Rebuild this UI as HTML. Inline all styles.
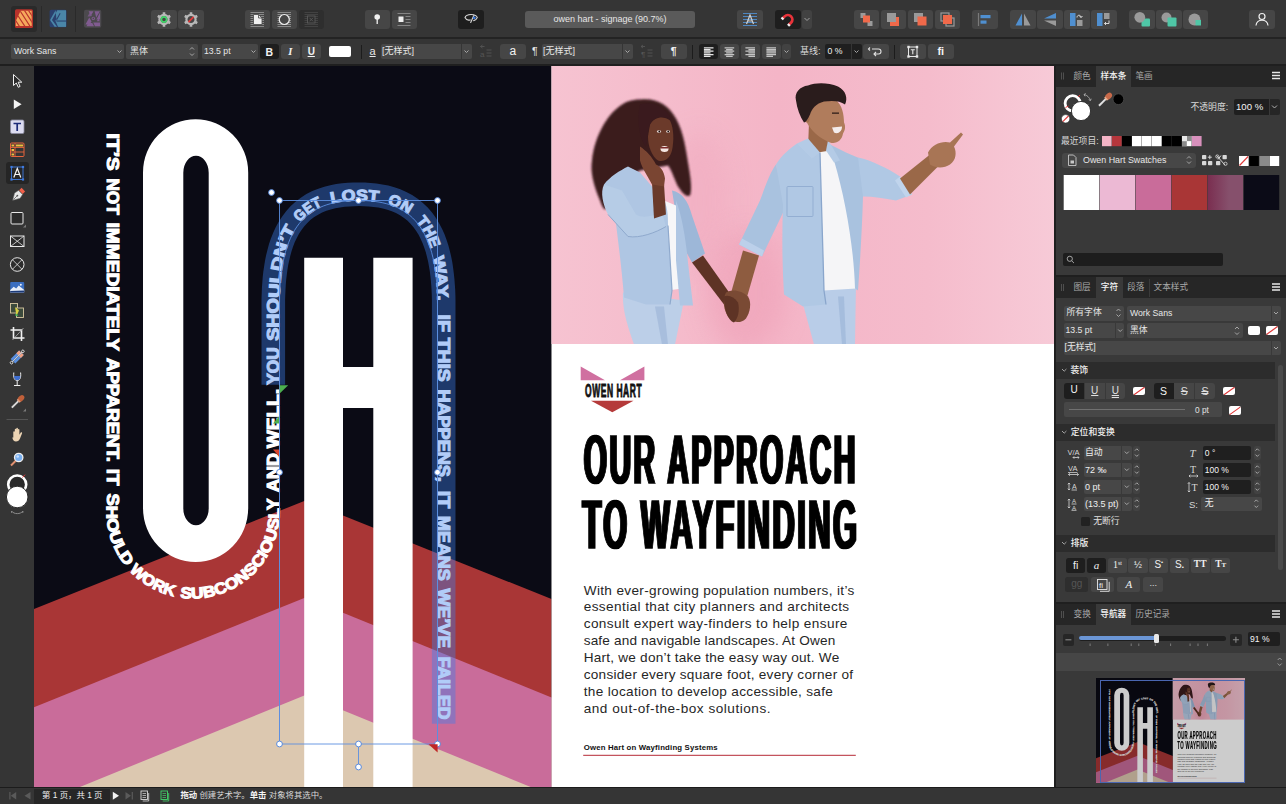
<!DOCTYPE html>
<html lang="zh"><head><meta charset="utf-8"><title>owen hart - signage</title>
<style>
html,body{margin:0;padding:0;background:#2a2a2a;}
body{width:1286px;height:804px;overflow:hidden;position:relative;font-family:"Liberation Sans","Noto Sans CJK SC",sans-serif;font-size:9px;color:#dcdcdc;}
.a{position:absolute;box-sizing:border-box;}
.btn{position:absolute;box-sizing:border-box;background:#464646;border-radius:3px;}
.dk{background:#1e1e1e;}
.dis{background:#2e2e2e;}
.fld{position:absolute;box-sizing:border-box;background:#474747;border-radius:2px;color:#e4e4e4;white-space:nowrap;overflow:hidden;}
.dfld{position:absolute;box-sizing:border-box;background:#1f1f1f;border-radius:2px;color:#f0f0f0;white-space:nowrap;overflow:hidden;}
.t{position:absolute;white-space:nowrap;line-height:1;}
svg{position:absolute;overflow:visible;}
.cj{font-family:"Liberation Sans","Noto Sans CJK SC",sans-serif;}
</style></head><body>
<!-- ===== top toolbar ===== -->
<div class="a" style="left:0;top:0;width:1286px;height:38px;background:#353535;"></div>
<div class="a" style="left:0;top:37px;width:1286px;height:2px;background:#232323;"></div>
<div class="btn dk" style="left:11px;top:6px;width:26px;height:26px;background:#2a2a2a;"></div>
<div class="a" style="left:41px;top:6px;width:1px;height:26px;background:#2a2a2a;"></div>
<div class="a" style="left:75px;top:6px;width:1px;height:26px;background:#2a2a2a;"></div>
<div class="btn" style="left:151px;top:10px;width:26px;height:19px;"></div>
<div class="btn" style="left:178px;top:10px;width:26px;height:19px;"></div>
<div class="btn" style="left:244.5px;top:10px;width:25.5px;height:19px;"></div>
<div class="btn" style="left:271.5px;top:10px;width:25.5px;height:19px;"></div>
<div class="btn dis" style="left:298.5px;top:10px;width:25.5px;height:19px;"></div>
<div class="btn" style="left:364.5px;top:10px;width:25.5px;height:19px;"></div>
<div class="btn" style="left:391.5px;top:10px;width:25.5px;height:19px;"></div>
<div class="btn dk" style="left:458px;top:10px;width:26px;height:19px;"></div>
<div class="a" style="left:525px;top:11px;width:170px;height:17px;background:#5a5a5a;border-radius:3px;"></div>
<div class="t" style="left:525px;top:15px;width:170px;text-align:center;font-size:9px;color:#e6e6e6;">owen hart - signage (90.7%)</div>
<div class="btn" style="left:737px;top:10px;width:25.5px;height:19px;"></div>
<div class="btn dk" style="left:775px;top:10px;width:26px;height:19px;"></div>
<div class="btn" style="left:802px;top:10px;width:10px;height:19px;background:#424242;"></div>
<div class="btn" style="left:853.5px;top:10px;width:25.5px;height:19px;"></div>
<div class="btn" style="left:880.5px;top:10px;width:25.5px;height:19px;"></div>
<div class="btn" style="left:907.5px;top:10px;width:25.5px;height:19px;"></div>
<div class="btn" style="left:934.5px;top:10px;width:25.5px;height:19px;"></div>
<div class="btn" style="left:972px;top:10px;width:26px;height:19px;"></div>
<div class="btn" style="left:1010px;top:10px;width:26px;height:19px;"></div>
<div class="btn" style="left:1037px;top:10px;width:26px;height:19px;"></div>
<div class="btn" style="left:1064px;top:10px;width:26px;height:19px;"></div>
<div class="btn" style="left:1091px;top:10px;width:25.5px;height:19px;"></div>
<div class="btn" style="left:1129px;top:10px;width:26px;height:19px;"></div>
<div class="btn" style="left:1156px;top:10px;width:26px;height:19px;"></div>
<div class="btn" style="left:1183px;top:10px;width:25px;height:19px;"></div>
<div class="btn" style="left:1249px;top:10px;width:26px;height:19px;"></div>
<svg width="1286" height="39" viewBox="0 0 1286 39" style="left:0;top:0;">
<!-- publisher -->
<rect x="15" y="9.200" width="18" height="18.800" rx="1.600" fill="#b9322b"/>
<clipPath id="cpub"><path d="M15.800,21 L20.600,10.700 H31.700 V26 H15.800 Z"/></clipPath>
<g clip-path="url(#cpub)"><rect x="15" y="9" width="18" height="19" fill="#f6a85c"/>
<g stroke="#b9322b" stroke-width="1.150"><path d="M11.500 14l9 14M15.500 12l10.500 16M19.500 10l11 17M23.500 9l10 15.500M27.500 9l8 12"/></g></g>
<!-- designer -->
<rect x="49.600" y="9.800" width="17" height="17.500" rx="1.600" fill="#2b416f"/>
<path d="M55.600,10.300 H66 V20.400 H56.800 L60.600,13.400 L59.700,12.900 L55.400,20.800 L58,26.700 H66 V21.800 H56.600 M55.600,10.300 L50.300,19.600 V20.500 L54.600,26.700 H57 L52,20 L57.300,10.300 Z" fill="#4a86a8"/>
<path d="M56.600,21.800 H66 V26.700 H58.700 Z" fill="#4a86a8"/>
<!-- photo -->
<rect x="84" y="9.800" width="17.300" height="17.900" rx="2" fill="#4b494d"/>
<g fill="#805b90"><path d="M88.600,11.200 H93.500 L91,15.400 Z"/><path d="M94.600,11.200 H99.900 L96.200,17.600 Z"/><path d="M100,12.500 V19.500 H96.400 Z"/><path d="M85.400,24.500 L89.300,17.600 L91.500,21.400 L89.600,24.500 Z"/><path d="M86.500,26.200 H94 L92.300,23 H88.200 Z"/><path d="M95,26.200 L93.200,22.400 H100 V26.200 Z"/><path d="M99.900,21.200 H96.800 L98.400,18.400 Z"/><path d="M87.500,16.500 L90,12.300 L92,16 L89.300,16.500 Z" opacity="0.800"/><circle cx="93.300" cy="18.400" r="1.700"/></g>
<circle cx="93.300" cy="18.400" r="0.800" fill="#4b494d"/>
<!-- gears -->
<g id="gear1" transform="translate(164,19.5)"><circle r="4.6" fill="none" stroke="#b8b8b8" stroke-width="2.2"/><g stroke="#b8b8b8" stroke-width="2.6"><path d="M0-7.2V-5M0 7.2V5M-6.2-3.6l1.9 1.1M6.2-3.6l-1.9 1.1M-6.2 3.6l1.9-1.1M6.2 3.6l-1.9-1.1"/></g><circle r="2.6" fill="none" stroke="#42d66a" stroke-width="1.6"/></g>
<g transform="translate(191,19.5)"><circle r="4.6" fill="none" stroke="#b8b8b8" stroke-width="2.2"/><g stroke="#b8b8b8" stroke-width="2.6"><path d="M0-7.2V-5M0 7.2V5M-6.2-3.6l1.9 1.1M6.2-3.6l-1.9 1.1M-6.2 3.6l1.9-1.1M6.2 3.6l-1.9-1.1"/></g><path d="M-2.6 2.6L2.6-2.6" stroke="#e03a3a" stroke-width="1.7"/></g>
<!-- doc / circle / x lined icons -->
<g stroke="#9a9a9a" stroke-width="0.8"><path d="M250.5 12.5h13.5M250.5 14.5h13.5M250.5 16.5h13.5M250.5 18.5h13.5M250.5 20.5h13.5M250.5 22.5h13.5M250.5 24.5h13.5M250.5 26.5h13.5"/><path d="M277.5 12.5h13.5M277.5 14.5h13.5M277.5 16.5h13.5M277.5 18.5h13.5M277.5 20.5h13.5M277.5 22.5h13.5M277.5 24.5h13.5M277.5 26.5h13.5"/></g>
<g stroke="#484848" stroke-width="0.8"><path d="M304.500 12.5h13.500M304.500 14.500h13.500M304.500 16.500h13.500M304.500 18.500h13.500M304.500 20.500h13.500M304.500 22.500h13.500M304.500 24.500h13.500M304.500 26.500h13.500"/></g>
<path d="M253.500 14.500h5l3.500 3.500v6.500h-8.500z" fill="#f0f0f0" stroke="#464646" stroke-width="0.8"/>
<path d="M258.500 14.500v3.500h3.500" fill="none" stroke="#464646" stroke-width="0.8"/>
<circle cx="284.300" cy="19.500" r="5" fill="#464646" stroke="#f0f0f0" stroke-width="1.2"/>
<rect x="307.500" y="16" width="7.500" height="7" fill="#2e2e2e" stroke="#5a5a5a" stroke-width="0.9"/><path d="M309.500 17.800l3.500 3.500M313 17.800l-3.500 3.500" stroke="#5a5a5a" stroke-width="0.9"/>
<!-- pin -->
<circle cx="377.200" cy="17" r="2.800" fill="#f2f2f2"/><path d="M377.200 19v5" stroke="#f2f2f2" stroke-width="1.300"/>
<!-- text wrap icon -->
<g stroke="#8c8c8c" stroke-width="0.9"><path d="M397.500 13.500h13M397.500 25.500h13M405.500 16.500h5M405.500 19.500h5M405.500 22.500h5"/></g><rect x="398.500" y="16.500" width="5" height="5.500" fill="#f0f0f0"/>
<!-- eye/preview -->
<path d="M465,17.600 C466.200,13.400 476,13.400 477.300,17.600 C476.600,19.200 475.200,20.300 473.700,20.600 M465,17.600 C466,19.600 468,20.600 470.200,19.900 M473.700,15.800 L470.700,22.500" fill="none" stroke="#d8d8d8" stroke-width="1.100" stroke-linecap="round"/><circle cx="474.300" cy="17.800" r="1.400" fill="#3d7be0"/>
<!-- baseline grid -->
<g stroke="#4f8fd0" stroke-width="0.900"><path d="M743 13.500h14M743 16.500h14M743 19.500h14M743 22.500h14M743 25.500h14"/></g>
<path d="M746.500 24l3.500-9 3.500 9M747.800 21h4.400" fill="none" stroke="#d0d0d0" stroke-width="1.200"/>
<!-- magnet -->
<g transform="translate(788.200,19.200) rotate(45)"><path d="M-4.500 3.500v-3a4.500 4.500 0 0 1 9 0v3" fill="none" stroke="#e8333a" stroke-width="2.800"/><rect x="-5.900" y="2.500" width="2.800" height="2.200" fill="#f2f2f2"/><rect x="3.100" y="2.500" width="2.800" height="2.200" fill="#f2f2f2"/></g>
<path d="M804.500 18l2.500 2.500 2.500-2.500" fill="none" stroke="#a0a0a0" stroke-width="1"/>
<!-- arrange icons -->
<rect x="860.500" y="13" width="5" height="5" fill="#9a9a9a"/><rect x="867.500" y="21" width="5" height="5" fill="#9a9a9a"/><rect x="863" y="15.500" width="7" height="7" fill="#f0694a"/>
<rect x="890" y="17" width="9" height="9" fill="#f0694a"/><rect x="887" y="13" width="9" height="9" fill="#9a9a9a"/>
<rect x="914" y="13" width="9" height="9" fill="#9a9a9a"/><rect x="917.500" y="16.500" width="9" height="9" fill="#f0694a"/>
<rect x="941" y="13" width="8" height="8" fill="none" stroke="#9a9a9a" stroke-width="1.200"/><rect x="946" y="18" width="8" height="8" fill="none" stroke="#9a9a9a" stroke-width="1.200"/><rect x="943" y="15" width="9" height="9" fill="#f0694a"/>
<!-- align -->
<path d="M978.500 13v13" stroke="#7a7a7a" stroke-width="1.200"/><rect x="980.500" y="15" width="10" height="3.200" fill="#4f8fd0"/><rect x="980.500" y="20.500" width="6" height="3.200" fill="#4f8fd0"/>
<!-- flips -->
<path d="M1022 13.500v12h-6.500z" fill="#4f8fd0"/><path d="M1024 13.500v12h6.500z" fill="#9a9a9a"/>
<path d="M1056 18.500h-12l12-5.500z" fill="#4f8fd0"/><path d="M1056 20.500h-12l12 5.500z" fill="#9a9a9a"/>
<rect x="1070" y="13" width="5.500" height="13" fill="#4f8fd0"/><rect x="1077" y="20" width="5.500" height="6" fill="#9a9a9a"/><path d="M1077 17.500c0-3 4-3 4 0M1081 17.500l-1.500-1.500M1081 17.500l1.500-1.500" fill="none" stroke="#e8e8e8" stroke-width="0.900"/>
<rect x="1097" y="13" width="5.500" height="13" fill="#4f8fd0"/><rect x="1104" y="13" width="5.500" height="6" fill="#9a9a9a"/><path d="M1109 20.500v3h-4.500M1104.500 23.500l1.500-1.500M1104.500 23.500l1.500 1.500" fill="none" stroke="#e8e8e8" stroke-width="0.900"/>
<!-- boolean -->
<rect x="1141.500" y="18.500" width="8.500" height="8" rx="1" fill="#4fc6a6"/><circle cx="1139.800" cy="17.300" r="5.400" fill="#9a9a9a"/>
<circle cx="1166.500" cy="17.500" r="5" fill="#9a9a9a"/><rect x="1167.500" y="17.500" width="9" height="9" rx="1" fill="#4fc6a6"/>
<circle cx="1194.500" cy="19.500" r="6" fill="#9a9a9a"/><rect x="1195.500" y="20" width="5.500" height="5.500" fill="#4fc6a6"/>
<!-- user -->
<circle cx="1262" cy="16.500" r="3" fill="none" stroke="#f0f0f0" stroke-width="1.200"/><path d="M1256 25.500c0.500-7 11.500-7 12 0" fill="none" stroke="#f0f0f0" stroke-width="1.200"/>
</svg>
<!-- ===== context toolbar ===== -->
<div class="a" style="left:0;top:39px;width:1286px;height:25px;background:#353535;"></div>
<div class="a" style="left:0;top:64px;width:1286px;height:1.500px;background:#1f1f1f;"></div>
<div class="fld" style="left:11px;top:44px;width:103.500px;height:15px;border-radius:2px 0 0 2px;"></div>
<div class="fld" style="left:115px;top:44px;width:9px;height:15px;border-radius:0 2px 2px 0;"></div>
<div class="t" style="left:14px;top:47px;font-size:8.700px;color:#e8e8e8;">Work Sans</div>
<div class="fld" style="left:126px;top:44px;width:72px;height:15px;"></div>
<div class="t cj" style="left:130px;top:46.500px;font-size:9px;color:#e8e8e8;">黑体</div>
<div class="fld" style="left:202px;top:44px;width:46.500px;height:15px;border-radius:2px 0 0 2px;"></div>
<div class="fld" style="left:249px;top:44px;width:9px;height:15px;border-radius:0 2px 2px 0;"></div>
<div class="t" style="left:204px;top:47px;font-size:8.700px;color:#e8e8e8;">13.5 pt</div>
<div class="btn dk" style="left:259.500px;top:44px;width:19.500px;height:15px;"></div>
<div class="btn" style="left:280.500px;top:44px;width:19.500px;height:15px;"></div>
<div class="btn" style="left:301.500px;top:44px;width:19.500px;height:15px;"></div>
<div class="t" style="left:259.500px;top:46.500px;width:19.500px;text-align:center;font-size:10.500px;font-weight:bold;color:#f2f2f2;">B</div>
<div class="t" style="left:280.500px;top:46.500px;width:19.500px;text-align:center;font-size:10.500px;font-weight:bold;font-style:italic;color:#f2f2f2;font-family:'Liberation Serif',serif;">I</div>
<div class="t" style="left:301.500px;top:46.500px;width:19.500px;text-align:center;font-size:10px;font-weight:bold;color:#f2f2f2;text-decoration:underline;">U</div>
<div class="a" style="left:329px;top:45.500px;width:21.500px;height:11.500px;background:#fff;border-radius:2px;"></div>
<div class="a" style="left:361px;top:45px;width:1px;height:14px;background:#1c1c1c;"></div>
<div class="t" style="left:369.500px;top:45.500px;font-size:11px;color:#e8e8e8;text-decoration:underline;">a</div>
<div class="fld" style="left:381px;top:44px;width:80px;height:15px;border-radius:2px 0 0 2px;"></div>
<div class="fld" style="left:462px;top:44px;width:9.500px;height:15px;border-radius:0 2px 2px 0;"></div>
<div class="t cj" style="left:382px;top:46.500px;font-size:9px;color:#e8e8e8;">[无样式]</div>
<div class="btn" style="left:500px;top:44px;width:25.500px;height:15px;"></div>
<div class="t" style="left:500px;top:45px;width:25.500px;text-align:center;font-size:12px;color:#f2f2f2;">a</div>
<div class="t" style="left:532px;top:46px;font-size:10.500px;color:#e8e8e8;">¶</div>
<div class="fld" style="left:541.500px;top:44px;width:80.500px;height:15px;border-radius:2px 0 0 2px;"></div>
<div class="fld" style="left:623px;top:44px;width:9.500px;height:15px;border-radius:0 2px 2px 0;"></div>
<div class="t cj" style="left:543px;top:46.500px;font-size:9px;color:#e8e8e8;">[无样式]</div>
<div class="btn" style="left:661px;top:44px;width:25.500px;height:15px;"></div>
<div class="t" style="left:661px;top:46px;width:25.500px;text-align:center;font-size:10.500px;font-weight:bold;color:#f2f2f2;">¶</div>
<div class="a" style="left:692px;top:45px;width:1px;height:14px;background:#1c1c1c;"></div>
<div class="btn dk" style="left:698.500px;top:44px;width:19.500px;height:15px;"></div>
<div class="btn" style="left:719.500px;top:44px;width:19.500px;height:15px;"></div>
<div class="btn" style="left:740.500px;top:44px;width:19.500px;height:15px;"></div>
<div class="btn" style="left:761.500px;top:44px;width:19.500px;height:15px;"></div>
<div class="btn" style="left:782px;top:44px;width:8.500px;height:15px;background:#424242;"></div>
<div class="t cj" style="left:800px;top:46.500px;font-size:9px;color:#d8d8d8;">基线:</div>
<div class="dfld" style="left:825px;top:44px;width:26px;height:15px;border-radius:2px 0 0 2px;"></div>
<div class="dfld" style="left:852px;top:44px;width:9.500px;height:15px;border-radius:0 2px 2px 0;"></div>
<div class="t" style="left:827.500px;top:47px;font-size:8.700px;color:#f0f0f0;">0 %</div>
<div class="btn" style="left:863px;top:44px;width:25.500px;height:15px;"></div>
<div class="a" style="left:894px;top:45px;width:1px;height:14px;background:#1c1c1c;"></div>
<div class="btn" style="left:900px;top:44px;width:25.500px;height:15px;"></div>
<div class="btn" style="left:928px;top:44px;width:25.500px;height:15px;"></div>
<div class="t" style="left:928px;top:45.500px;width:25.500px;text-align:center;font-size:11px;font-weight:bold;color:#f2f2f2;">fi</div>
<svg width="1286" height="26" viewBox="0 39 1286 26" style="left:0;top:39px;">
<g fill="none" stroke="#a8a8a8" stroke-width="1"><path d="M117.500 50.500l2 2 2-2M251.500 50.500l2 2 2-2M464.500 50.500l2 2 2-2M625.500 50.500l2 2 2-2M784.500 50.500l2 2 2-2M854.500 50.500l2 2 2-2"/>
<path d="M190 49.500l2-2 2 2M190 53.500l2 2 2-2"/></g>
<!-- disabled style icons -->
<g stroke="#555" stroke-width="0.900" fill="none"><path d="M480.500 46.500h4M482.500 45l-2 1.500 2 1.500M486.500 50h5M486.500 53h5M486.500 56h5"/><path d="M641 46.500h4M643 45l-2 1.500 2 1.500M647.500 50h5M647.500 53h5M647.500 56h5"/></g>
<text x="480" y="57" font-size="8" fill="#555" font-family="Liberation Sans, sans-serif">a</text>
<text x="641" y="57" font-size="8" fill="#555" font-family="Liberation Sans, sans-serif">¶</text>
<!-- align icons -->
<path d="M703.9 47.8h9.600M703.9 49.5h6.600M703.9 51.2h9.600M703.9 52.9h6.600M703.9 54.6h9.600M703.9 56.3h6.600" stroke="#e6e6e6" stroke-width="1.250"/><path d="M724.6 47.8h9.600M726.1 49.5h6.600M724.6 51.2h9.600M726.1 52.9h6.600M724.6 54.6h9.600M726.1 56.3h6.600" stroke="#c4c4c4" stroke-width="1.250"/><path d="M745.4 47.8h9.600M748.4 49.5h6.600M745.4 51.2h9.600M748.4 52.9h6.600M745.4 54.6h9.600M748.4 56.3h6.600" stroke="#c4c4c4" stroke-width="1.250"/><path d="M766.4 47.8h9.600M766.4 49.5h9.600M766.4 51.2h9.600M766.4 52.9h9.600M766.4 54.6h9.600M766.4 56.3h6.600" stroke="#c4c4c4" stroke-width="1.250"/>
<!-- return arrow -->
<path d="M872 49h6.500a2.500 2.500 0 0 1 0 5h-4M876 52l-2 2 2 2M870 47.500l-1.500 1.500 1.500 1.500" fill="none" stroke="#e0e0e0" stroke-width="1.100"/>
<!-- text frame icon -->
<rect x="908.500" y="47" width="8.500" height="9.500" fill="none" stroke="#e8e8e8" stroke-width="1"/><g fill="#e8e8e8"><rect x="907.300" y="45.800" width="2.400" height="2.400"/><rect x="915.800" y="45.800" width="2.400" height="2.400"/><rect x="907.300" y="55.300" width="2.400" height="2.400"/><rect x="915.800" y="55.300" width="2.400" height="2.400"/></g>
<path d="M910.800 49.800h4M912.800 49.800v4.500" stroke="#e8e8e8" stroke-width="1.100"/>
</svg>
<!-- ===== left tools ===== -->
<div class="a" style="left:0;top:65.500px;width:34px;height:722px;background:#353535;"></div>
<div class="btn dk" style="left:6px;top:162px;width:22.500px;height:22px;background:#252525;"></div>
<svg width="34" height="722" viewBox="0 65 34 722" style="left:0;top:65px;">
<!-- move arrow -->
<path d="M13.500 74.500v11l2.800-2.500 2 4.300 1.800-0.900-2-4.200h3.700z" fill="#2a2a2a" stroke="#f0f0f0" stroke-width="1"/>
<!-- node arrow -->
<path d="M13.800 99.500v9.500l7.800-4.700z" fill="#f4f4f4"/>
<!-- frame text -->
<rect x="10.500" y="120" width="13.500" height="13.500" rx="1.500" fill="#dcdcf0" stroke="#8a8aa0" stroke-width="0.800"/><path d="M13.500 123.500h7.500M17.200 123.500v7.500" stroke="#1c2a78" stroke-width="1.700"/>
<!-- table -->
<rect x="10.500" y="143" width="13.500" height="13.500" rx="1" fill="none" stroke="#e8643c" stroke-width="1"/><path d="M10.500 147.500h13.500M10.500 152h13.500M15 143v13.500" stroke="#e8643c" stroke-width="0.900"/><rect x="11.500" y="144.500" width="2.500" height="2" fill="#f0c040"/><rect x="16" y="144.500" width="7" height="2" fill="#f0c040"/><rect x="11.500" y="149" width="2.500" height="2" fill="#f0c040"/><rect x="11.500" y="153.500" width="2.500" height="2" fill="#f0c040"/>
<!-- artistic text -->
<rect x="11.500" y="167" width="11.500" height="12.500" fill="none" stroke="#3f7be0" stroke-width="0.900"/><g fill="#3f7be0"><rect x="10.400" y="165.900" width="2.200" height="2.200"/><rect x="21.900" y="165.900" width="2.200" height="2.200"/><rect x="10.400" y="178.400" width="2.200" height="2.200"/><rect x="21.900" y="178.400" width="2.200" height="2.200"/></g>
<path d="M13.800 177.500l3.500-9 3.500 9M15 174.500h4.600" fill="none" stroke="#f4f4f4" stroke-width="1.200"/>
<!-- pen -->
<g transform="translate(17,196) rotate(45)"><path d="M-2.500-9h5v3.500h-5z" fill="#f0604a"/><path d="M-2.800-5h5.600l1 4.500-3.800 6.500-3.800-6.500z" fill="#e8e8e8" stroke="#777" stroke-width="0.500"/><path d="M0 0v5" stroke="#555" stroke-width="0.700"/><circle r="0.900" cy="-0.500" fill="#555"/></g>
<!-- rectangle -->
<rect x="11" y="212.500" width="12" height="11.500" rx="1" fill="#2c2c2c" stroke="#e8e8e8" stroke-width="1"/><path d="M26 227.500v-3l-3 3z" fill="#7a7a7a"/>
<!-- picture frame rect -->
<rect x="10.500" y="236" width="13.500" height="10.500" fill="#2c2c2c" stroke="#e8e8e8" stroke-width="1"/><path d="M10.500 236l13.500 10.500M24 236l-13.500 10.500" stroke="#e8e8e8" stroke-width="0.800"/>
<!-- ellipse frame -->
<circle cx="17.200" cy="264.500" r="6.800" fill="#2c2c2c" stroke="#e8e8e8" stroke-width="1"/><path d="M12.400 259.700l9.600 9.600M22 259.700l-9.600 9.600" stroke="#e8e8e8" stroke-width="0.800"/>
<!-- place image -->
<rect x="10.200" y="282" width="14" height="10.500" rx="1" fill="#3a6ec0"/><path d="M10.200 290l3.500-3.200 2.500 1.600 2.500-2.800 5.500 4.400v2.500h-14z" fill="#e8eef8"/><path d="M10.200 292.500v-1.500l14-0.500v2z" fill="#1c3a78"/><circle cx="20.800" cy="284.800" r="1" fill="#e8eef8"/>
<!-- data merge -->
<rect x="10.500" y="303.500" width="7" height="9.500" fill="#3c4a3c" stroke="#d8c8a0" stroke-width="0.900"/><rect x="16.500" y="308" width="7" height="9.500" fill="#3c4a3c" stroke="#d8c8a0" stroke-width="0.900"/><path d="M15 307l4 3.500-2.500 5.500z" fill="#d8d040"/><path d="M15.500 313.500l3 2-3 0.500z" fill="#40c060"/>
<!-- crop -->
<path d="M13.500 327v11h11M10.500 330h11v11" fill="none" stroke="#f0f0f0" stroke-width="1.600"/><path d="M12.500 340l11-12" stroke="#b0b0b0" stroke-width="0.800"/>
<!-- fill/gradient tool -->
<g transform="translate(17.200,357) rotate(-45)"><rect x="-6" y="-3.300" width="12" height="2.800" fill="#5a8fe0"/><rect x="-6" y="0.500" width="12" height="2.800" fill="#5a8fe0"/><rect x="2" y="-3.300" width="4" height="2.800" fill="#f0a080"/><rect x="2" y="0.500" width="4" height="2.800" fill="#f0a080"/><path d="M-7.500 0h15" stroke="#f0f0f0" stroke-width="0.900"/><circle cx="-8" r="1.300" fill="#353535" stroke="#f0f0f0" stroke-width="0.800"/><circle cx="8" r="1.300" fill="#353535" stroke="#f0f0f0" stroke-width="0.800"/></g>
<!-- transparency glass -->
<path d="M13.800 372.500c-0.500 5 0.500 8 3.400 8s3.900-3 3.400-8" fill="none" stroke="#f0f0f0" stroke-width="1"/><path d="M14 376c0.300 3 1.200 4.300 3.200 4.300s2.900-1.300 3.200-4.300z" fill="#3f6ed0"/><path d="M17.200 380.500v4.500M14 385.500h6.400" stroke="#f0f0f0" stroke-width="1"/>
<!-- eyedropper -->
<g transform="translate(17.500,402) rotate(45)"><rect x="-1" y="-2" width="2" height="10" fill="#d8d8d8"/><ellipse cy="-5" rx="2.700" ry="3.800" fill="#c0603a"/><rect x="-2" y="-2.500" width="4" height="1.500" fill="#e0a080"/></g><path d="M26 411.500v-3l-3 3z" fill="#7a7a7a"/>
<path d="M6.500 419.500h21.500" stroke="#555" stroke-width="1"/>
<!-- hand -->
<path d="M13.300 437.500v-5.500c0-1 1.500-1 1.500 0v-2.500c0-1 1.500-1 1.500 0v-1c0-1 1.600-1 1.600 0v1.200c0-1 1.500-1 1.500 0v5l1.200-2c0.600-0.900 1.900-0.200 1.400 0.800l-2 5c-0.800 2-2 3-4 3s-3.200-1.300-3.700-4z" fill="#ecd4b4"/>
<!-- zoom -->
<circle cx="18.700" cy="457.500" r="4.200" fill="#7ab0f0" stroke="#f0f0f0" stroke-width="1.300"/><path d="M15.500 461l-4.500 4.500" stroke="#e09070" stroke-width="2"/><circle cx="17.700" cy="456.500" r="1.300" fill="#c8e0ff"/>
<!-- colour wells -->
<circle cx="17.200" cy="484.500" r="9" fill="#2a2a2a" stroke="#fff" stroke-width="2.600"/><path d="M22.500 477.500l2.500-2.800" stroke="#e03a3a" stroke-width="1"/>
<circle cx="17.200" cy="497" r="10.800" fill="#fff" stroke="#2a2a2a" stroke-width="1"/>
<path d="M11.500 511c2.500 3.500 9 3.500 11.500 0M11.500 511l0.300 2M23 511l-0.300 2" fill="none" stroke="#8a8a8a" stroke-width="1"/>
</svg>
<!-- ===== canvas ===== -->
<div class="a" style="left:34px;top:65.500px;width:1020px;height:722px;background:#1c1c1c;overflow:hidden;">
<svg width="1020.500" height="722" viewBox="34 65.500 1020.500 722" style="left:0;top:0;overflow:hidden;">
<defs>
<linearGradient id="pinkbg" x1="0" x2="1" y1="0" y2="0"><stop offset="0" stop-color="#f6c3d1"/><stop offset="0.450" stop-color="#f4b5c7"/><stop offset="0.750" stop-color="#f5bccc"/><stop offset="1" stop-color="#f7cad7"/></linearGradient>
<filter id="thick" x="-5%" y="-5%" width="110%" height="110%"><feMorphology operator="dilate" radius="1 0" result="d"/><feMorphology in="d" operator="erode" radius="0 1"/></filter>
<filter id="thick2" x="-5%" y="-5%" width="110%" height="110%"><feMorphology operator="dilate" radius="0.500 0"/></filter>
<filter id="blur8" x="-50%" y="-50%" width="200%" height="200%"><feGaussianBlur stdDeviation="12"/></filter><filter id="blur1" x="-10%" y="-10%" width="120%" height="120%"><feGaussianBlur stdDeviation="1.100"/></filter><filter id="blur05" x="-10%" y="-10%" width="120%" height="120%"><feGaussianBlur stdDeviation="0.600"/></filter>
<path id="p1" d="M106.500,120 L106.500,511.500 A86.500,86.500 0 0 0 279.500,511.500 L279.500,200"/>
<path id="p2" d="M279.500,743 L279.500,304 C279.500,219 312.500,200 358.500,200 C404.500,200 437.500,219 437.500,304 L437.500,743"/>
<g id="art">
<!-- left page -->
<rect x="10" y="40" width="541.500" height="760" fill="#0b0b15"/>
<path d="M10,618 L305.500,500 L551.500,598.500 V800 H10z" fill="#a93636"/>
<path d="M10,716.500 L305.500,597 L551.500,697 V800 H10z" fill="#c96c9a"/>
<path d="M10,815 L305.500,694.500 L551.500,795 V800 H10z" fill="#dcc8b0"/>
<!-- O -->
<path fill-rule="evenodd" fill="#fff" d="M143,172 A52.600,53.300 0 0 1 248.200,172 V507.600 A52.600,54 0 0 1 143,507.600 Z M183.300,172.200 V507.800 A12.700,17 0 0 0 208.700,507.800 V172.200 A12.700,17 0 0 0 183.300,172.200 Z"/>
<!-- H -->
<path fill="#fff" d="M304.200,257.200 H343 V366.400 H373.300 V257.200 H412.600 V800 H373.300 V407.500 H343 V800 H304.200 Z"/>
<!-- path text -->
<g font-family="Liberation Sans, sans-serif" font-weight="bold" font-size="15.600" fill="#fff" stroke="#fff" stroke-width="1.050">
<!--PT_START--><text><textPath href="#p1" startOffset="12.8" textLength="37.3" lengthAdjust="spacingAndGlyphs">IT’S</textPath></text>
<text><textPath href="#p1" startOffset="57.9" textLength="36.3" lengthAdjust="spacingAndGlyphs">NOT</textPath></text>
<text><textPath href="#p1" startOffset="102.0" textLength="128.5" lengthAdjust="spacingAndGlyphs">IMMEDIATELY</textPath></text>
<text><textPath href="#p1" startOffset="237.5" textLength="104.0" lengthAdjust="spacingAndGlyphs">APPARENT.</textPath></text>
<text><textPath href="#p1" startOffset="348.3" textLength="16.7" lengthAdjust="spacingAndGlyphs">IT</textPath></text>
<text><textPath href="#p1" startOffset="372.9" textLength="77.6" lengthAdjust="spacingAndGlyphs">SHOULD</textPath></text>
<text><textPath href="#p1" startOffset="455.5" textLength="52.2" lengthAdjust="spacingAndGlyphs">WORK</textPath></text>
<text><textPath href="#p1" startOffset="514.0" textLength="162.5" lengthAdjust="spacingAndGlyphs">SUBCONSCIOUSLY</textPath></text>
<text><textPath href="#p1" startOffset="682.8" textLength="39.0" lengthAdjust="spacingAndGlyphs">AND</textPath></text>
<text><textPath href="#p1" startOffset="726.5" textLength="59.3" lengthAdjust="spacingAndGlyphs">WELL.</textPath></text>
<text><textPath href="#p2" startOffset="358.7" textLength="37.4" lengthAdjust="spacingAndGlyphs">YOU</textPath></text>
<text><textPath href="#p2" startOffset="402.7" textLength="115.1" lengthAdjust="spacingAndGlyphs">SHOULDN’T</textPath></text>
<text><textPath href="#p2" startOffset="525.0" textLength="28.0" lengthAdjust="spacingAndGlyphs">GET</textPath></text>
<text><textPath href="#p2" startOffset="562.4" textLength="47.2" lengthAdjust="spacingAndGlyphs">LOST</textPath></text>
<text><textPath href="#p2" startOffset="618.7" textLength="23.9" lengthAdjust="spacingAndGlyphs">ON</textPath></text>
<text><textPath href="#p2" startOffset="652.3" textLength="31.7" lengthAdjust="spacingAndGlyphs">THE</textPath></text>
<text><textPath href="#p2" startOffset="692.6" textLength="44.1" lengthAdjust="spacingAndGlyphs">WAY.</textPath></text>
<text><textPath href="#p2" startOffset="750.4" textLength="17.6" lengthAdjust="spacingAndGlyphs">IF</textPath></text>
<text><textPath href="#p2" startOffset="773.5" textLength="44.0" lengthAdjust="spacingAndGlyphs">THIS</textPath></text>
<text><textPath href="#p2" startOffset="825.3" textLength="92.4" lengthAdjust="spacingAndGlyphs">HAPPENS,</textPath></text>
<text><textPath href="#p2" startOffset="926.5" textLength="17.6" lengthAdjust="spacingAndGlyphs">IT</textPath></text>
<text><textPath href="#p2" startOffset="951.8" textLength="64.9" lengthAdjust="spacingAndGlyphs">MEANS</textPath></text>
<text><textPath href="#p2" startOffset="1024.4" textLength="59.4" lengthAdjust="spacingAndGlyphs">WE’VE</textPath></text>
<text><textPath href="#p2" startOffset="1092.6" textLength="62.7" lengthAdjust="spacingAndGlyphs">FAILED</textPath></text>
<!--PT_END-->
</g>
<!-- right page -->
<rect x="551.500" y="40" width="503" height="760" fill="#fff"/>
<rect x="551.500" y="40" width="503" height="303.500" fill="url(#pinkbg)"/>
<!--PHOTO_START--><clipPath id="phclip"><rect x="551.500" y="40" width="503" height="303.500"/></clipPath><g id="photo" clip-path="url(#phclip)">
<!-- soft shadows on bg -->
<ellipse cx="745" cy="290" rx="40" ry="60" fill="#ee9fb6" opacity="0.550" filter="url(#blur8)"/>
<ellipse cx="700" cy="200" rx="30" ry="70" fill="#f0a8bd" opacity="0.450" filter="url(#blur8)"/>
<!-- ===== woman ===== -->
<!-- hair -->
<path d="M640,99 C655,97 668,103 676,118 C684,132 686,150 689,168 C691,180 692,190 690,195 C686,197 682,192 678,186 C674,178 672,170 668,165 L640,170 C625,178 612,190 608,205 C606,212 603,209 600,200 C594,186 590,172 592,160 C594,140 604,118 618,107 C625,101 632,99 640,99 Z" fill="#3a1a1e" filter="url(#blur1)"/>
<!-- jeans -->
<path d="M623,292 L684,300 L675,344 L634,344 C628,326 622,310 623,292 Z" fill="#bccfe8"/>
<path d="M655,306 L662,344 L668,344 L664,306 Z" fill="#9fb6d8" opacity="0.700"/>
<!-- far arm sleeve (her left) -->
<path d="M672,190 C682,192 688,200 692,215 L705,253 L692,262 L680,240 Z" fill="#9db7d8"/>
<!-- forearm to hands -->
<path d="M692,262 L703,255 L732,296 L724,304 Z" fill="#5e3325"/>
<!-- white tee -->
<path d="M664,200 L676,205 L682,288 L668,290 Z" fill="#f6f6f8"/>
<!-- shirt torso -->
<path d="M604,184 C610,176 620,170 628,166 L640,172 L652,186 L662,196 C668,205 668,215 668,225 L672,290 L670,304 L646,304 L624,297 C622,270 618,240 615,215 Z" fill="#afc6e3"/>
<path d="M676,200 C682,215 686,240 688,262 L693,305 L680,305 L676,260 Z" fill="#afc6e3"/>
<path d="M668,225 L672,290 L670,304" fill="none" stroke="#8fa9cd" stroke-width="1.200"/>
<!-- near arm sleeve (bent) -->
<path d="M604,184 C600,192 603,204 608,214 L628,236 C640,238 656,232 666,226 L662,212 C652,216 642,218 636,214 L622,190 Z" fill="#b6cce6"/>
<path d="M608,214 L628,236 C640,238 656,232 666,226" fill="none" stroke="#8fa9cd" stroke-width="1"/>
<!-- forearm + hand on cheek -->
<path d="M652,182 L664,184 L666,214 L654,218 Z" fill="#6a3a2a"/>
<path d="M640,146 C646,150 652,156 656,164 C660,166 664,170 665,178 L664,186 L652,184 C648,176 642,168 640,160 Z" fill="#7a4532"/>
<!-- face -->
<path d="M650,124 C654,116 664,115 670,120 C674,128 674,140 672,150 C670,158 664,162 658,160 C652,156 648,146 648,136 Z" fill="#6b3a2a"/>
<ellipse cx="664.500" cy="148.500" rx="4" ry="3" fill="#f4e6e2"/>
<path d="M660.500,146.500 h8 v1.500 h-8z" fill="#7a2a2a"/>
<ellipse cx="659" cy="131" rx="2" ry="1.200" fill="#f0e8e4"/><ellipse cx="668" cy="131" rx="1.800" ry="1.200" fill="#f0e8e4"/>
<circle cx="659.300" cy="131" r="0.900" fill="#1a0a0a"/><circle cx="668.200" cy="131" r="0.900" fill="#1a0a0a"/>
<!-- hair front strands over face side -->
<path d="M640,104 C652,100 666,106 672,120 C664,114 654,116 650,124 C647,132 648,140 646,146 C640,140 636,120 640,104 Z" fill="#3a1a1e"/>
<!-- ===== man ===== -->
<!-- jeans -->
<path d="M802,300 L822,284 L856,283 L855,344 L814,344 Z" fill="#b9cde8"/>
<path d="M838,296 L842,344 L846,344 L844,296 Z" fill="#98b2d6" opacity="0.600"/>
<!-- left (back) arm sleeve -->
<path d="M776,164 C770,172 766,184 760,200 L739,244 L762,256 L786,206 Z" fill="#a9c2df"/>
<path d="M739,244 L762,256 L764,250 L742,238 Z" fill="#bcd0ea"/>
<!-- left forearm -->
<path d="M743,250 L759,255 L746,300 L730,296 Z" fill="#8e5c40"/>
<!-- clasped hands -->
<path d="M726,292 C732,288 742,290 748,296 C752,302 750,312 746,318 C740,324 732,322 728,316 C724,310 722,300 726,292 Z" fill="#7a4a34"/>
<path d="M724,296 C728,294 734,296 738,302 C740,310 738,318 734,322 C728,320 724,310 724,296 Z" fill="#5e3325"/>
<!-- white tee -->
<path d="M808,148 L832,148 C838,170 850,210 855,240 L856,288 L824,290 Z" fill="#f5f5f7"/>
<!-- shirt left panel -->
<path d="M797,143 L808,148 L820,152 L824,290 L826,304 L803,306 L784,294 C782,262 782,232 783,204 L776,164 C782,154 790,148 797,143 Z" fill="#b0c8e4"/>
<path d="M820,152 L824,290 L826,304" fill="none" stroke="#8aa6cc" stroke-width="1.300"/>
<rect x="787" y="186" width="26" height="30" rx="1" fill="none" stroke="#93aed2" stroke-width="1"/>
<!-- shirt right panel -->
<path d="M830,144 L846,152 L860,158 C864,170 864,184 863,196 C862,230 860,262 858,290 L855,288 C854,250 846,200 834,160 Z" fill="#a9c2df"/>
<!-- right sleeve -->
<path d="M858,157 C872,160 888,168 900,176 L912,194 L896,200 C884,198 874,196 863,196 Z" fill="#b0c8e4"/>
<path d="M900,176 L912,194 L906,197 L895,180 Z" fill="#c0d4ec"/>
<!-- right forearm + hand -->
<path d="M900,178 L910,194 L938,166 L930,154 Z" fill="#9a6848"/>
<path d="M928,152 C932,144 942,140 950,142 L961,132 L963,134 L954,146 C957,152 956,160 950,164 C944,168 936,168 930,164 Z" fill="#a87555"/>
<!-- neck -->
<path d="M809,122 L828,134 L830,150 L818,152 L808,148 Z" fill="#9a6848"/>
<!-- collar -->
<path d="M797,143 L808,138 L820,152 L812,158 Z" fill="#b4cbe6"/>
<path d="M828,140 L832,146 L840,160 L834,162 L826,150 Z" fill="#b4cbe6"/>
<!-- face -->
<path d="M808,108 C812,100 826,98 836,100 C842,104 844,114 844,122 C846,126 845,130 843,133 C842,140 836,144 830,142 C820,138 810,130 806,120 Z" fill="#b07c5c"/>
<ellipse cx="807" cy="118" rx="2.500" ry="4" fill="#a06e50"/>
<path d="M832,127 L842,126 C842,131 838,134 834,132 Z" fill="#f4ecec"/>
<path d="M832,112 h7 v1.300 h-7z" fill="#2a1a16"/>
<!-- hair -->
<path d="M796,100 C794,92 800,86 808,85 C816,82 828,82 838,86 C846,90 848,98 845,104 C840,100 832,100 824,101 C816,103 812,108 810,114 C808,118 806,122 804,122 C800,116 797,108 796,100 Z" fill="#2b1a1c" filter="url(#blur05)"/>
</g>
<!--PHOTO_END-->
<!-- logo -->
<path d="M580.700,366 V379.700 H605 Z M644.400,366 V379.700 H620 Z" fill="#d070a0"/>
<path d="M591,400.200 H633.500 L612.300,411.700 Z" fill="#b53a3a"/>
<g transform="translate(585,396.600) scale(0.470,1)"><text font-family="Liberation Sans, sans-serif" font-weight="bold" font-size="18" fill="#111" stroke="#111" stroke-width="0.900" letter-spacing="1.200">OWEN HART</text></g>
<!-- heading -->
<g filter="url(#thick)" font-family="Liberation Sans, sans-serif" font-weight="bold" font-size="70.500" fill="#050505" stroke="#050505" stroke-width="1.600">
<g transform="translate(583.800,483.200) scale(0.424,1)"><text letter-spacing="5.800">OUR APPROACH</text></g>
<g transform="translate(582.400,548.800) scale(0.436,1)"><text letter-spacing="5.800">TO WAYFINDING</text></g>
</g>
<!-- body -->
<g font-family="Liberation Sans, sans-serif" font-size="13.600" fill="#262626">
<text x="583.700" y="594.0" textLength="270.600" lengthAdjust="spacing">With ever-growing population numbers, it’s</text>
<text x="583.700" y="610.9" textLength="265.400" lengthAdjust="spacing">essential that city planners and architects</text>
<text x="583.700" y="627.9" textLength="263.700" lengthAdjust="spacing">consult expert way-finders to help ensure</text>
<text x="583.700" y="644.8" textLength="251.500" lengthAdjust="spacing">safe and navigable landscapes. At Owen</text>
<text x="583.700" y="661.8" textLength="255.500" lengthAdjust="spacing">Hart, we don’t take the easy way out. We</text>
<text x="583.700" y="678.7" textLength="269.400" lengthAdjust="spacing">consider every square foot, every corner of</text>
<text x="583.700" y="695.6" textLength="249.200" lengthAdjust="spacing">the location to develop accessible, safe</text>
<text x="583.700" y="712.6" textLength="186.800" lengthAdjust="spacing">and out-of-the-box solutions.</text>
</g>
<text x="583.700" y="749.100" font-family="Liberation Sans, sans-serif" font-weight="bold" font-size="7.800" fill="#111" textLength="134" lengthAdjust="spacing">Owen Hart on Wayfinding Systems</text>
<path d="M583.200,754.800 H855.800" stroke="#c4545e" stroke-width="1.200"/>
</g>
</defs>
<use href="#art"/>
<!--OV_START--><path d="M261.5,384.3 L261.5,379.3 L261.5,374.2 L261.5,369.2 L261.5,364.2 L261.5,359.1 L261.5,354.1 L261.5,349.1 L261.5,344.0 L261.5,339.0 L261.5,333.9 L261.5,328.9 L261.5,323.9 L261.5,318.8 L261.5,313.8 L261.5,308.7 L261.5,303.6 L261.5,298.4 L261.7,293.0 L261.9,287.6 L262.3,282.2 L262.7,276.8 L263.3,271.3 L264.1,265.9 L265.0,260.3 L266.1,254.8 L267.5,249.2 L269.0,243.6 L270.9,238.0 L273.1,232.4 L275.7,226.8 L278.7,221.3 L282.2,215.9 L286.1,210.7 L290.5,205.8 L295.5,201.3 L300.8,197.2 L306.4,193.6 L312.3,190.6 L318.3,188.2 L324.3,186.2 L330.3,184.7 L336.2,183.6 L342.1,182.8 L347.9,182.3 L353.6,182.1 L359.2,182.0 L364.9,182.1 L370.6,182.4 L376.4,183.0 L382.3,183.9 L388.3,185.1 L394.3,186.7 L400.3,188.8 L406.3,191.4 L412.1,194.5 L417.7,198.2 L422.9,202.4 L427.7,207.0 L432.0,212.0 L435.8,217.3 L439.1,222.7 L442.0,228.3 L444.5,233.8 L446.6,239.5 L448.4,245.1 L449.9,250.7 L451.2,256.2 L452.3,261.8 L453.1,267.3 L453.8,272.8 L454.4,278.2 L454.8,283.7 L455.2,289.1 L455.4,294.4 L455.5,299.8 L455.5,305.0 L455.5,310.1 L455.5,315.1 L455.5,320.2 L455.5,325.2 L455.5,330.2 L455.5,335.3 L455.5,340.3 L455.5,345.3 L455.5,350.4 L455.5,355.4 L455.5,360.5 L455.5,365.5 L455.5,370.5 L455.5,375.6 L455.5,380.6 L455.5,385.6 L455.5,390.7 L455.5,395.7 L455.5,400.8 L455.5,405.8 L455.5,410.8 L455.5,415.9 L455.5,420.9 L455.5,426.0 L455.5,431.0 L455.5,436.0 L455.5,441.1 L455.5,446.1 L455.5,451.1 L455.5,456.2 L455.5,461.2 L455.5,466.3 L455.5,471.3 L455.5,476.3 L455.5,481.4 L455.5,486.4 L455.5,491.4 L455.5,496.5 L455.5,501.5 L455.5,506.6 L455.5,511.6 L455.5,516.6 L455.5,521.7 L455.5,526.7 L455.5,531.7 L455.5,536.8 L455.5,541.8 L455.5,546.9 L455.5,551.9 L455.5,556.9 L455.5,562.0 L455.5,567.0 L455.5,572.1 L455.5,577.1 L455.5,582.1 L455.5,587.2 L455.5,592.2 L455.5,597.2 L455.5,602.3 L455.5,607.3 L455.5,612.4 L455.5,617.4 L455.5,622.4 L455.5,627.5 L455.5,632.5 L455.5,637.5 L455.5,642.6 L455.5,647.6 L455.5,652.7 L455.5,657.7 L455.5,662.7 L455.5,667.8 L455.5,672.8 L455.5,677.9 L455.5,682.9 L455.5,687.9 L455.5,693.0 L455.5,698.0 L455.5,703.0 L455.5,708.1 L455.5,713.1 L455.5,718.2 L455.5,723.2 L431.9,723.2 L431.9,718.2 L431.9,713.1 L431.9,708.1 L431.9,703.0 L431.9,698.0 L431.9,693.0 L431.9,687.9 L431.9,682.9 L431.9,677.9 L431.9,672.8 L431.9,667.8 L431.9,662.7 L431.9,657.7 L431.9,652.7 L431.9,647.6 L431.9,642.6 L431.9,637.5 L431.9,632.5 L431.9,627.5 L431.9,622.4 L431.9,617.4 L431.9,612.4 L431.9,607.3 L431.9,602.3 L431.9,597.2 L431.9,592.2 L431.9,587.2 L431.9,582.1 L431.9,577.1 L431.9,572.1 L431.9,567.0 L431.9,562.0 L431.9,556.9 L431.9,551.9 L431.9,546.9 L431.9,541.8 L431.9,536.8 L431.9,531.7 L431.9,526.7 L431.9,521.7 L431.9,516.6 L431.9,511.6 L431.9,506.6 L431.9,501.5 L431.9,496.5 L431.9,491.4 L431.9,486.4 L431.9,481.4 L431.9,476.3 L431.9,471.3 L431.9,466.3 L431.9,461.2 L431.9,456.2 L431.9,451.1 L431.9,446.1 L431.9,441.1 L431.9,436.0 L431.9,431.0 L431.9,426.0 L431.9,420.9 L431.9,415.9 L431.9,410.8 L431.9,405.8 L431.9,400.8 L431.9,395.7 L431.9,390.7 L431.9,385.6 L431.9,380.6 L431.9,375.6 L431.9,370.5 L431.9,365.5 L431.9,360.5 L431.9,355.4 L431.9,350.4 L431.9,345.3 L431.9,340.3 L431.9,335.3 L431.9,330.2 L431.9,325.2 L431.9,320.2 L431.9,315.1 L431.9,310.1 L431.9,305.1 L431.9,300.1 L431.8,295.1 L431.6,290.2 L431.3,285.3 L430.9,280.4 L430.4,275.5 L429.8,270.7 L429.0,265.9 L428.1,261.1 L427.0,256.4 L425.8,251.8 L424.3,247.2 L422.6,242.8 L420.7,238.5 L418.6,234.3 L416.2,230.4 L413.5,226.7 L410.5,223.2 L407.3,220.1 L403.7,217.3 L400.0,214.8 L396.0,212.6 L391.8,210.8 L387.4,209.3 L382.9,208.1 L378.3,207.1 L373.6,206.4 L368.8,206.0 L364.0,205.7 L359.1,205.6 L354.3,205.7 L349.5,205.9 L344.7,206.3 L340.0,206.9 L335.3,207.8 L330.8,208.9 L326.4,210.3 L322.1,212.1 L318.1,214.2 L314.2,216.6 L310.6,219.3 L307.3,222.4 L304.3,225.8 L301.5,229.4 L299.0,233.3 L296.8,237.4 L294.8,241.6 L293.1,246.0 L291.6,250.6 L290.3,255.2 L289.2,259.9 L288.2,264.6 L287.4,269.4 L286.8,274.2 L286.2,279.1 L285.8,284.0 L285.5,288.9 L285.3,293.8 L285.1,298.8 L285.1,303.7 L285.1,308.7 L285.1,313.8 L285.1,318.8 L285.1,323.9 L285.1,328.9 L285.1,333.9 L285.1,339.0 L285.1,344.0 L285.1,349.1 L285.1,354.1 L285.1,359.1 L285.1,364.2 L285.1,369.2 L285.1,374.2 L285.1,379.3 L285.1,384.3Z" fill="#3d80ed" fill-opacity="0.400"/>
<g fill="none" stroke="#5b8ee0" stroke-width="0.900">
<path d="M279.500,743.500 V200 H437.500 V743.500 Z"/>
<use href="#p2"/>
<path d="M358.500,743.500 V766.500"/>
</g>
<g fill="#fff" stroke="#4a7fd8" stroke-width="0.900">
<circle cx="279.500" cy="200" r="2.900"/><circle cx="358.500" cy="200" r="2.900"/><circle cx="437.500" cy="200" r="2.900"/>
<circle cx="279.500" cy="471.800" r="2.900"/><circle cx="437.500" cy="471.800" r="2.900"/>
<circle cx="279.500" cy="743.500" r="2.900"/><circle cx="358.500" cy="743.500" r="2.900"/><circle cx="437.500" cy="743.500" r="2.900"/>
<circle cx="358.500" cy="766.500" r="2.900"/><circle cx="271.500" cy="192" r="2.900"/>
</g>
<path d="M279.700,384.800 H288.200 L279.700,393 Z" fill="#4caf50"/>
<path d="M428.600,743.800 H437.600 V752 Z" fill="#c02626"/>
<path d="M279,416 V423 L273,423 Z" fill="#4caf50"/>
<path d="M279,449 V456 L273,449 Z" fill="#d9452e"/>
<!--OV_END-->
</svg>
</div>
<!-- ===== right panels ===== -->
<div class="a" style="left:1054px;top:65.500px;width:232px;height:722px;background:#1f1f1f;"></div>
<!-- panel 1: swatches -->
<div class="a" style="left:1055.500px;top:65.500px;width:230.500px;height:21.500px;background:#262626;"></div>
<div class="a" style="left:1096px;top:65.500px;width:35px;height:21.500px;background:#393939;"></div>
<div class="a" style="left:1055.500px;top:87px;width:230.500px;height:188px;background:#393939;"></div>
<div class="t cj" style="left:1073.500px;top:71.500px;font-size:8.600px;color:#a8a8a8;">颜色</div>
<div class="t cj" style="left:1100.500px;top:71.500px;font-size:8.600px;color:#f4f4f4;font-weight:500;">样本条</div>
<div class="t cj" style="left:1135.500px;top:71.500px;font-size:8.600px;color:#a8a8a8;">笔画</div>
<div class="t cj" style="left:1190.500px;top:102.500px;font-size:8.800px;color:#d8d8d8;">不透明度:</div>
<div class="dfld" style="left:1234px;top:98.500px;width:34.500px;height:16.500px;border-radius:2px 0 0 2px;"></div>
<div class="dfld" style="left:1269.500px;top:98.500px;width:10px;height:16.500px;border-radius:0 2px 2px 0;background:#262626;"></div>
<div class="t" style="left:1236px;top:102px;font-size:9.600px;color:#f4f4f4;">100 %</div>
<div class="t cj" style="left:1061px;top:137px;font-size:8.800px;color:#d8d8d8;">最近项目:</div>
<div class="fld" style="left:1061.500px;top:152.500px;width:134.500px;height:15.500px;border-radius:3px;"></div>
<div class="t" style="left:1083px;top:155.500px;font-size:8.900px;color:#e8e8e8;">Owen Hart Swatches</div>
<div class="dfld" style="left:1062.500px;top:253px;width:160px;height:13px;background:#1d1d1d;"></div>
<svg width="232" height="210" viewBox="1054 65 232 210" style="left:1054px;top:65px;">
<path d="M1061.500 72.500v7M1063.500 72.500v7" stroke="#5a5a5a" stroke-width="0.800"/>
<path d="M1272 72.500h8M1272 75.500h8M1272 78.500h8" stroke="#e8e8e8" stroke-width="1.400"/>
<!-- colour wells -->
<circle cx="1072.700" cy="103.300" r="7.600" fill="none" stroke="#fff" stroke-width="2.800"/>
<path d="M1065.500 107.500l3-1.500M1078 97l2-2" stroke="#e03a3a" stroke-width="1"/>
<circle cx="1081" cy="111" r="9.600" fill="#fff" stroke="#2a2a2a" stroke-width="0.900"/>
<circle cx="1065.600" cy="118.800" r="4.200" fill="#fff" stroke="#2a2a2a" stroke-width="0.600"/><path d="M1062.800 121.600l5.600-5.600" stroke="#e03a3a" stroke-width="1.100"/>
<path d="M1084 94.500c3 0.500 5.500 3 6.500 6M1084 94.500l1.800-1M1084 94.500l1 1.800M1090.500 100.500l-1.800-0.800M1090.500 100.500l0.700-1.800" fill="none" stroke="#a8a8a8" stroke-width="0.900"/>
<g transform="translate(1105,99.800) rotate(45)"><rect x="-1" y="-2" width="2" height="10.500" fill="#e0e0e0"/><ellipse cy="-5" rx="2.800" ry="4" fill="#c86a4a"/><rect x="-2" y="-2.300" width="4" height="1.500" fill="#e8b090"/></g>
<circle cx="1118.400" cy="99.200" r="5.400" fill="#000" stroke="#4a4a4a" stroke-width="0.800"/>
<path d="M1272 105.500l2.500 2.500 2.500-2.500" fill="none" stroke="#b0b0b0" stroke-width="1"/>
<!-- recent swatches -->
<g><rect x="1102" y="136" width="9.600" height="10.200" fill="#f4b4c6"/><rect x="1112" y="136" width="9.600" height="10.200" fill="#b5363c"/><rect x="1122" y="136" width="9.600" height="10.200" fill="#000"/><rect x="1132" y="136" width="9.600" height="10.200" fill="#fff"/><rect x="1142" y="136" width="9.600" height="10.200" fill="#fff"/><rect x="1152" y="136" width="9.600" height="10.200" fill="#fff"/><rect x="1162" y="136" width="9.600" height="10.200" fill="#000"/><rect x="1172" y="136" width="9.600" height="10.200" fill="#000"/>
<rect x="1182" y="136" width="9.600" height="10.200" fill="#fff"/><rect x="1182" y="141.100" width="4.800" height="5.100" fill="#8a8a8a"/><rect x="1186.800" y="136" width="4.800" height="5.100" fill="#8a8a8a"/><rect x="1182" y="136" width="4.800" height="5.100" fill="#e8e8e8"/>
<rect x="1192" y="136" width="9.600" height="10.200" fill="#d890bc"/></g>
<!-- doc icon -->
<path d="M1068.500 155h5l2.500 2.500v8h-7.500z" fill="none" stroke="#c8c8c8" stroke-width="0.900"/><rect x="1070.500" y="160.500" width="3.500" height="3" fill="#c8c8c8"/>
<path d="M1187 158.500l2-2 2 2M1187 161.500l2 2 2-2" fill="none" stroke="#b0b0b0" stroke-width="0.900"/>
<!-- grid icons -->
<g fill="#d8d8d8"><rect x="1202" y="155" width="4.300" height="4.300" rx="0.800"/><rect x="1202" y="161" width="4.300" height="4.300" rx="0.800"/><rect x="1208" y="161" width="4.300" height="4.300" rx="0.800"/><path d="M1209.800 155.200v4M1207.800 157.200h4" stroke="#d8d8d8" stroke-width="1"/>
<rect x="1222.500" y="155" width="4.300" height="4.300" rx="0.800"/><rect x="1216" y="161" width="4.300" height="4.300" rx="0.800"/></g>
<path d="M1216.500 155.500l8.500 9.500M1221 155.500l-3 4" stroke="#d8d8d8" stroke-width="1"/><circle cx="1217.300" cy="156.500" r="1.600" fill="none" stroke="#d8d8d8" stroke-width="0.800"/><circle cx="1225.500" cy="163.800" r="1.600" fill="none" stroke="#d8d8d8" stroke-width="0.800"/>
<!-- 4 small swatches -->
<rect x="1239" y="156" width="9.600" height="10" fill="#fff"/><path d="M1239.500 165.500l8.600-9" stroke="#e03a3a" stroke-width="1.100"/><rect x="1249.200" y="156" width="9.600" height="10" fill="#000"/><rect x="1259.400" y="156" width="9.600" height="10" fill="#8a8a8a"/><rect x="1269.600" y="156" width="9.600" height="10" fill="#fff"/>
<!-- large swatches -->
<defs><linearGradient id="sg" x1="0" x2="1"><stop offset="0" stop-color="#7a2e50"/><stop offset="0.600" stop-color="#86506c"/><stop offset="1" stop-color="#86506c"/></linearGradient></defs>
<rect x="1063.700" y="175" width="35.500" height="35" fill="#fff"/><rect x="1099.700" y="175" width="35.500" height="35" fill="#ecb9d4"/><rect x="1135.700" y="175" width="35.500" height="35" fill="#c96c9a"/><rect x="1171.700" y="175" width="35.500" height="35" fill="#a93636"/><rect x="1207.700" y="175" width="35.500" height="35" fill="url(#sg)"/><rect x="1243.700" y="175" width="35.500" height="35" fill="#0b0b17"/>
<!-- search -->
<circle cx="1069.800" cy="258.800" r="2.600" fill="none" stroke="#b0b0b0" stroke-width="0.900"/><path d="M1071.700 260.800l2.300 2.300" stroke="#b0b0b0" stroke-width="0.900"/>
</svg>
<!-- panel 2: character -->
<div class="a" style="left:1055.500px;top:277px;width:230.500px;height:21px;background:#262626;"></div>
<div class="a" style="left:1096px;top:277px;width:27px;height:21px;background:#393939;"></div>
<div class="a" style="left:1149px;top:279px;width:1px;height:18px;background:#3a3a3a;"></div>
<div class="a" style="left:1055.500px;top:298px;width:230.500px;height:304px;background:#393939;"></div>
<div class="t cj" style="left:1073.500px;top:283px;font-size:8.600px;color:#a8a8a8;">图层</div>
<div class="t cj" style="left:1100.800px;top:283px;font-size:8.600px;color:#f4f4f4;font-weight:500;">字符</div>
<div class="t cj" style="left:1127.200px;top:283px;font-size:8.600px;color:#a8a8a8;">段落</div>
<div class="t cj" style="left:1153.600px;top:283px;font-size:8.600px;color:#a8a8a8;">文本样式</div>
<!-- row1 -->
<div class="fld" style="left:1063.700px;top:305.500px;width:60.700px;height:15px;"></div>
<div class="t cj" style="left:1066.500px;top:308.300px;font-size:8.800px;color:#e8e8e8;">所有字体</div>
<div class="fld" style="left:1127.200px;top:305.500px;width:143.500px;height:15px;border-radius:2px 0 0 2px;"></div>
<div class="fld" style="left:1271.500px;top:305.500px;width:9px;height:15px;border-radius:0 2px 2px 0;"></div>
<div class="t" style="left:1130px;top:308.500px;font-size:8.700px;color:#e8e8e8;">Work Sans</div>
<!-- row2 -->
<div class="fld" style="left:1063.700px;top:323px;width:51.500px;height:15px;border-radius:2px 0 0 2px;"></div>
<div class="fld" style="left:1116px;top:323px;width:8.400px;height:15px;border-radius:0 2px 2px 0;"></div>
<div class="t" style="left:1065.500px;top:326px;font-size:8.700px;color:#e8e8e8;">13.5 pt</div>
<div class="fld" style="left:1127.200px;top:323px;width:115.700px;height:15px;"></div>
<div class="t cj" style="left:1130px;top:325.800px;font-size:8.800px;color:#e8e8e8;">黑体</div>
<div class="a" style="left:1247.700px;top:326px;width:12.500px;height:9px;background:#fff;border-radius:2px;"></div>
<div class="a" style="left:1265.700px;top:326px;width:12.700px;height:9px;background:#fff;border-radius:2px;"></div>
<!-- row3 -->
<div class="fld" style="left:1063.700px;top:340.800px;width:207px;height:14.500px;border-radius:2px 0 0 2px;"></div>
<div class="fld" style="left:1271.500px;top:340.800px;width:9px;height:14.500px;border-radius:0 2px 2px 0;"></div>
<div class="t cj" style="left:1064.500px;top:343.300px;font-size:8.800px;color:#e8e8e8;">[无样式]</div>
<!-- section: decorations -->
<div class="a" style="left:1055.500px;top:362.400px;width:219px;height:16.500px;background:#2c2c2c;"></div>
<div class="t cj" style="left:1070.500px;top:366.300px;font-size:8.800px;color:#f0f0f0;font-weight:500;">装饰</div>
<div class="btn dk" style="left:1064.400px;top:383px;width:19.500px;height:15.500px;border-radius:3px 0 0 3px;"></div>
<div class="btn" style="left:1084.900px;top:383px;width:19.700px;height:15.500px;border-radius:0;"></div>
<div class="btn" style="left:1105.600px;top:383px;width:19.500px;height:15.500px;border-radius:0 3px 3px 0;"></div>
<div class="t" style="left:1064.400px;top:385px;width:19.500px;text-align:center;font-size:10px;color:#f4f4f4;">U</div>
<div class="t" style="left:1084.900px;top:386px;width:19.700px;text-align:center;font-size:10px;color:#e0e0e0;text-decoration:underline;">U</div>
<div class="t" style="left:1105.600px;top:386px;width:19.500px;text-align:center;font-size:10px;color:#e0e0e0;text-decoration:underline;text-decoration-style:double;">U</div>
<div class="a" style="left:1133px;top:386.700px;width:12.300px;height:8.600px;background:#fff;border-radius:2px;"></div>
<div class="btn dk" style="left:1153.600px;top:383px;width:20px;height:15.500px;border-radius:3px 0 0 3px;"></div>
<div class="btn" style="left:1174.300px;top:383px;width:20px;height:15.500px;border-radius:0;"></div>
<div class="btn" style="left:1194.900px;top:383px;width:20px;height:15.500px;border-radius:0 3px 3px 0;"></div>
<div class="t" style="left:1153.600px;top:385.500px;width:20px;text-align:center;font-size:10.500px;color:#f4f4f4;">S</div>
<div class="t" style="left:1174.300px;top:385.500px;width:20px;text-align:center;font-size:10.500px;color:#e0e0e0;text-decoration:line-through;">S</div>
<div class="t" style="left:1194.900px;top:385.500px;width:20px;text-align:center;font-size:10.500px;color:#e0e0e0;text-decoration:line-through;text-decoration-style:double;">S</div>
<div class="a" style="left:1223px;top:386.700px;width:12.300px;height:8.600px;background:#fff;border-radius:2px;"></div>
<div class="fld" style="left:1064.400px;top:402.200px;width:157.300px;height:15.200px;border-radius:2px;"></div>
<div class="a" style="left:1069px;top:409.300px;width:116px;height:1px;background:#707070;"></div>
<div class="t" style="left:1195px;top:405.500px;font-size:8.300px;color:#e0e0e0;">0 pt</div>
<div class="a" style="left:1228.700px;top:406.400px;width:12.300px;height:8.800px;background:#fff;border-radius:2px;"></div>
<!-- section: positioning -->
<div class="a" style="left:1055.500px;top:424.200px;width:219px;height:16.600px;background:#2c2c2c;"></div>
<div class="t cj" style="left:1070.800px;top:428.200px;font-size:8.800px;color:#f0f0f0;font-weight:500;">定位和变换</div>
<div class="fld" style="left:1083.500px;top:445.5px;width:37.500px;height:14.200px;border-radius:2px 0 0 2px;"></div><div class="fld" style="left:1122px;top:445.5px;width:9.500px;height:14.200px;border-radius:0 2px 2px 0;"></div><div class="fld" style="left:1133.200px;top:445.5px;width:7.300px;height:14.200px;background:#424242;"></div><div class="t cj" style="left:1085px;top:448.1px;font-size:8.800px;color:#f0f0f0;">自动</div>
<div class="dfld" style="left:1202.800px;top:445.5px;width:48.700px;height:14.200px;"></div><div class="fld" style="left:1253.600px;top:445.5px;width:7.400px;height:14.200px;background:#424242;"></div><div class="t" style="left:1204.800px;top:448.5px;font-size:8.500px;color:#f4f4f4;">0 °</div>
<div class="fld" style="left:1083.500px;top:462.5px;width:37.500px;height:14.200px;border-radius:2px 0 0 2px;"></div><div class="fld" style="left:1122px;top:462.5px;width:9.500px;height:14.200px;border-radius:0 2px 2px 0;"></div><div class="fld" style="left:1133.200px;top:462.5px;width:7.300px;height:14.200px;background:#424242;"></div><div class="t" style="left:1085px;top:465.5px;font-size:9px;color:#f0f0f0;">72 ‰</div>
<div class="dfld" style="left:1202.800px;top:462.5px;width:48.700px;height:14.200px;"></div><div class="fld" style="left:1253.600px;top:462.5px;width:7.400px;height:14.200px;background:#424242;"></div><div class="t" style="left:1204.800px;top:465.5px;font-size:8.500px;color:#f4f4f4;">100 %</div>
<div class="fld" style="left:1083.500px;top:479.5px;width:37.500px;height:14.200px;border-radius:2px 0 0 2px;"></div><div class="fld" style="left:1122px;top:479.5px;width:9.500px;height:14.200px;border-radius:0 2px 2px 0;"></div><div class="fld" style="left:1133.200px;top:479.5px;width:7.300px;height:14.200px;background:#424242;"></div><div class="t" style="left:1085px;top:482.5px;font-size:9px;color:#f0f0f0;">0 pt</div>
<div class="dfld" style="left:1202.800px;top:479.5px;width:48.700px;height:14.200px;"></div><div class="fld" style="left:1253.600px;top:479.5px;width:7.400px;height:14.200px;background:#424242;"></div><div class="t" style="left:1204.800px;top:482.5px;font-size:8.500px;color:#f4f4f4;">100 %</div>
<div class="fld" style="left:1083.500px;top:496.5px;width:37.500px;height:14.200px;border-radius:2px 0 0 2px;"></div><div class="fld" style="left:1122px;top:496.5px;width:9.500px;height:14.200px;border-radius:0 2px 2px 0;"></div><div class="fld" style="left:1133.200px;top:496.5px;width:7.300px;height:14.200px;background:#424242;"></div><div class="t" style="left:1085px;top:499.5px;font-size:9px;color:#f0f0f0;">(13.5 pt)</div>
<div class="fld" style="left:1201.200px;top:496.5px;width:60.700px;height:14.500px;"></div><div class="t cj" style="left:1204.800px;top:499.1px;font-size:8.800px;color:#f0f0f0;">无</div>
<div class="a" style="left:1081.200px;top:517px;width:8.500px;height:8.600px;background:#222;border-radius:1.500px;"></div>
<div class="t cj" style="left:1093.200px;top:517px;font-size:8.800px;color:#e0e0e0;">无断行</div>
<!-- section: typography -->
<div class="a" style="left:1055.500px;top:535.300px;width:219px;height:16.400px;background:#2c2c2c;"></div>
<div class="t cj" style="left:1070.800px;top:539.200px;font-size:8.800px;color:#f0f0f0;font-weight:500;">排版</div>
<div class="btn dk" style="left:1066px;top:558.200px;width:19.200px;height:14.600px;border-radius:2.500px;"></div><div class="btn dk" style="left:1087px;top:558.200px;width:19.200px;height:14.600px;border-radius:2.500px;"></div><div class="btn" style="left:1107.9px;top:558.200px;width:19.200px;height:14.600px;border-radius:2.500px;"></div><div class="btn" style="left:1128.4px;top:558.200px;width:19.200px;height:14.600px;border-radius:2.500px;"></div><div class="btn" style="left:1149.2px;top:558.200px;width:19.200px;height:14.600px;border-radius:2.500px;"></div><div class="btn" style="left:1169.8px;top:558.200px;width:19.200px;height:14.600px;border-radius:2.500px;"></div><div class="btn" style="left:1190.6px;top:558.200px;width:19.200px;height:14.600px;border-radius:2.500px;"></div><div class="btn" style="left:1211.1px;top:558.200px;width:19.200px;height:14.600px;border-radius:2.500px;"></div>
<div class="t" style="left:1066px;top:560.300px;width:19.200px;text-align:center;font-size:10.500px;color:#f0f0f0;font-family:'Liberation Sans',serif;">fi</div><div class="t" style="left:1087px;top:560.300px;width:19.200px;text-align:center;font-size:11px;color:#f0f0f0;font-family:'Liberation Serif',serif;font-style:italic;">a</div><div class="t" style="left:1107.9px;top:560.300px;width:19.200px;text-align:center;font-size:10px;color:#f0f0f0;font-family:'Liberation Serif',serif;">1<span style="font-size:6px;position:relative;top:-3px;">st</span></div><div class="t" style="left:1128.4px;top:560.300px;width:19.200px;text-align:center;font-size:9.500px;color:#f0f0f0;font-family:'Liberation Sans',serif;">½</div><div class="t" style="left:1149.2px;top:560.300px;width:19.200px;text-align:center;font-size:10px;color:#f0f0f0;font-family:'Liberation Sans',serif;">S<span style="font-size:6px;position:relative;top:-4px;">•</span></div><div class="t" style="left:1169.8px;top:560.300px;width:19.200px;text-align:center;font-size:10px;color:#f0f0f0;font-family:'Liberation Sans',serif;">S<span style="font-size:6px;position:relative;top:1px;">•</span></div><div class="t" style="left:1190.6px;top:560.300px;width:19.200px;text-align:center;font-size:9.500px;color:#f0f0f0;font-family:'Liberation Serif',serif;font-weight:bold;">TT</div><div class="t" style="left:1211.1px;top:560.300px;width:19.200px;text-align:center;font-size:9.500px;color:#f0f0f0;font-family:'Liberation Serif',serif;font-weight:bold;">T<span style="font-size:7px;">T</span></div>
<div class="btn dis" style="left:1065.4px;top:577.100px;width:22.9px;height:14.600px;border-radius:2.500px;"></div><div class="btn " style="left:1091.3px;top:577.100px;width:23px;height:14.600px;border-radius:2.500px;"></div><div class="btn " style="left:1117.3px;top:577.100px;width:22.9px;height:14.600px;border-radius:2.500px;"></div><div class="btn " style="left:1143.3px;top:577.100px;width:20.1px;height:14.600px;border-radius:2.500px;"></div>
<div class="t" style="left:1065.400px;top:578.500px;width:22.900px;text-align:center;font-size:10px;color:#555;">gg</div>
<div class="t" style="left:1117.300px;top:578.800px;width:22.900px;text-align:center;font-size:11px;color:#f0f0f0;font-family:'Liberation Serif',serif;font-style:italic;">A</div>
<div class="t" style="left:1143.300px;top:578.500px;width:20.100px;text-align:center;font-size:9px;color:#e0e0e0;">...</div>
<!-- scrollbar -->
<div class="a" style="left:1277.500px;top:365px;width:5px;height:205px;background:#4a4a4a;border-radius:2.500px;"></div>
<svg width="232" height="330" viewBox="1054 275 232 330" style="left:1054px;top:275px;">
<path d="M1061.500 284v7M1063.500 284v7" stroke="#5a5a5a" stroke-width="0.800"/>
<path d="M1272 284h8M1272 287h8M1272 290h8" stroke="#e8e8e8" stroke-width="1.400"/>
<g fill="none" stroke="#b0b0b0" stroke-width="0.900">
<path d="M1116.500 311l2-2 2 2M1116.500 314.500l2 2 2-2"/><path d="M1274 312l2 2 2-2"/>
<path d="M1118.200 329.500l2 2 2-2"/><path d="M1235 329l2-2 2 2M1235 332.500l2 2 2-2"/><path d="M1274 347l2 2 2-2"/>
<path d="M1062 369l2.200 2.200 2.200-2.200M1062 431l2.200 2.200 2.200-2.200M1062 542l2.200 2.200 2.200-2.200"/>
<path d="M1124.800 451.6l2 2 2-2"/><path d="M1135 450.6l1.800-1.800 1.800 1.800M1135 454.6l1.800 1.800 1.800-1.800"/><path d="M1124.800 468.6l2 2 2-2"/><path d="M1135 467.6l1.800-1.800 1.800 1.800M1135 471.6l1.800 1.800 1.800-1.800"/><path d="M1124.800 485.6l2 2 2-2"/><path d="M1135 484.6l1.800-1.800 1.800 1.800M1135 488.6l1.800 1.800 1.800-1.800"/><path d="M1124.800 502.6l2 2 2-2"/><path d="M1135 501.6l1.800-1.800 1.800 1.800M1135 505.6l1.800 1.800 1.800-1.800"/><path d="M1255.500 450.6l1.800-1.800 1.800 1.800M1255.500 454.6l1.800 1.800 1.800-1.800"/><path d="M1255.500 467.6l1.800-1.800 1.800 1.800M1255.500 471.6l1.800 1.800 1.800-1.800"/><path d="M1255.500 484.6l1.800-1.800 1.800 1.800M1255.500 488.6l1.800 1.800 1.800-1.800"/><path d="M1254.500 501.7l1.800-1.800 1.800 1.800M1254.500 505.7l1.800 1.800 1.800-1.800"/></g>
<g stroke="#e03a3a" stroke-width="1.100"><path d="M1266.500 334.500l11-8M1134 394.700l10.500-7.500M1224 394.700l10.500-7.500M1229.700 414.600l10.500-7.500"/></g>
<!-- row icons -->
<g font-family="Liberation Sans, sans-serif" fill="#d8d8d8" font-size="7.500">
<text x="1067.500" y="455">V/A</text><text x="1068" y="471" text-decoration="underline">VA</text>
<text x="1072" y="488.500" font-size="7">A</text><text x="1072" y="503" font-size="6">A</text><text x="1072" y="509.500" font-size="6">A</text>
<text x="1189.500" y="457" font-size="11" font-family="Liberation Serif, serif" font-style="italic">T</text>
<text x="1190" y="473" font-size="10" font-family="Liberation Serif, serif">T</text>
<text x="1191.500" y="491" font-size="10" font-family="Liberation Serif, serif">T</text>
<text x="1189" y="508" font-size="9.500">S:</text>
</g>
<g stroke="#d8d8d8" stroke-width="0.800" fill="none"><path d="M1073 457.500h6M1073 457.500l1.200-1.200M1073 457.500l1.200 1.200M1079 457.500l-1.200-1.200M1079 457.500l-1.200 1.200"/><path d="M1068.500 474.500h10M1068.500 474.500l1.300-1.300M1068.500 474.500l1.300 1.300M1078.500 474.500l-1.300-1.300M1078.500 474.500l-1.300 1.300"/>
<path d="M1069 483v7M1069 483l-1.200 1.300M1069 483l1.200 1.300M1069 490l-1.200-1.300M1069 490l1.200-1.300M1071.500 490h5.500"/>
<path d="M1069 499v9M1069 499l-1.200 1.300M1069 499l1.200 1.300M1069 508l-1.200-1.300M1069 508l1.200-1.300M1071.500 504h5M1071.500 510.300h5"/>
<path d="M1189 476h9M1189 476l1.300-1.300M1189 476l1.300 1.300M1198 476l-1.300-1.300M1198 476l-1.300 1.300"/>
<path d="M1189 482.500v9.500M1189 482.500l-1.200 1.300M1189 482.500l1.200 1.300M1189 492l-1.200-1.300M1189 492l1.200-1.300"/></g>
<!-- fi box icon -->
<rect x="1097.500" y="579.500" width="9.500" height="10" fill="none" stroke="#e8e8e8" stroke-width="0.900"/><path d="M1100 591.300h9.200v-9.500" fill="none" stroke="#e8e8e8" stroke-width="0.900"/><text x="1099" y="588" font-size="8" font-family="Liberation Sans, sans-serif" fill="#e8e8e8">fi</text>
</svg>
<!-- panel 3: navigator -->
<div class="a" style="left:1055.500px;top:603.800px;width:230.500px;height:21.200px;background:#262626;"></div>
<div class="a" style="left:1096.200px;top:603.800px;width:35px;height:21.200px;background:#393939;"></div>
<div class="a" style="left:1055.500px;top:625px;width:230.500px;height:163px;background:#393939;"></div>
<div class="t cj" style="left:1073.600px;top:610.300px;font-size:8.600px;color:#a8a8a8;">变换</div>
<div class="t cj" style="left:1100.300px;top:610.300px;font-size:8.600px;color:#f4f4f4;font-weight:500;">导航器</div>
<div class="t cj" style="left:1135.500px;top:610.300px;font-size:8.600px;color:#a8a8a8;">历史记录</div>
<div class="btn" style="left:1062.700px;top:633.800px;width:11.400px;height:12px;background:#262626;border-radius:2px;"></div>
<div class="btn" style="left:1230.200px;top:633.800px;width:11.400px;height:12px;background:#262626;border-radius:2px;"></div>
<div class="dfld" style="left:1248px;top:632.200px;width:32.200px;height:14px;"></div>
<div class="t" style="left:1250px;top:635px;font-size:8.600px;color:#f4f4f4;">91 %</div>
<div class="a" style="left:1079.200px;top:635.600px;width:146.700px;height:5.600px;background:#1e1e1e;border-radius:2.800px;"></div>
<div class="a" style="left:1079.200px;top:636.400px;width:77px;height:4px;background:#6b96d6;border-radius:2px;"></div>
<div class="a" style="left:1153.600px;top:634.300px;width:5px;height:8.400px;background:#e8e8e8;border-radius:1.500px;"></div>
<div class="a" style="left:1055.500px;top:652.800px;width:230.500px;height:18.300px;background:#464646;"></div>
<div class="a" style="left:1096.400px;top:678px;width:149px;height:104.800px;background:#1c1c1c;overflow:hidden;">
<svg width="149" height="104.800" viewBox="16 51 1038.500 736.500" preserveAspectRatio="none" style="left:0;top:0;"><use href="#art"/><rect x="16" y="51" width="1038.500" height="736.500" fill="#000" opacity="0.200"/></svg>
</div>
<div class="a" style="left:1100.300px;top:680px;width:144.800px;height:102.500px;border:1px solid #4a66b0;"></div>
<svg width="232" height="190" viewBox="1054 600 232 190" style="left:1054px;top:600px;">
<path d="M1061.500 611v7M1063.500 611v7" stroke="#5a5a5a" stroke-width="0.800"/>
<path d="M1272 611h8M1272 614h8M1272 617h8" stroke="#e8e8e8" stroke-width="1.400"/>
<path d="M1065.400 639.800h6" stroke="#8a8a8a" stroke-width="1.100"/><path d="M1232.900 639.800h6M1235.900 636.800v6" stroke="#8a8a8a" stroke-width="1.100"/>
<g stroke="#858585" stroke-width="0.900"><path d="M1090.100 643.500v2.500M1107.900 643.500v2.500M1131.200 643.500v2.500M1138.800 643.500v2.500M1155.300 643.500v2.500M1170.600 643.500v2.500M1190.100 643.500v2.500M1198 643.500v2.500M1207.400 643.500v2.500"/></g>
<path d="M1277.700 660l2-2 2 2M1277.700 663.500l2 2 2-2" fill="none" stroke="#a0a0a0" stroke-width="0.900"/>
</svg>
<!-- ===== status bar ===== -->
<div class="a" style="left:0;top:787.500px;width:1286px;height:16.500px;background:#353535;"></div>
<div class="a" style="left:0;top:787.300px;width:1286px;height:1px;background:#1c1c1c;"></div>
<div class="a" style="left:34.200px;top:788.500px;width:76.200px;height:15.500px;background:#262626;"></div>
<div class="t cj" style="left:42px;top:791.300px;font-size:8.400px;color:#f0f0f0;">第 1 页，共 1 页</div>
<div class="t cj" style="left:180.400px;top:791.300px;font-size:8.400px;color:#d8d8d8;"><b style="color:#f4f4f4;">拖动</b> 创建艺术字。<b style="color:#f4f4f4;">单击</b> 对象将其选中。</div>
<svg width="200" height="17" viewBox="0 787 200 17" style="left:0;top:787px;">
<g fill="#5a5a5a"><path d="M16.200 792v7.500l-5.500-3.750z"/><rect x="9.300" y="792" width="1.200" height="7.500"/><path d="M30.500 792v7.500l-6-3.750z"/>
<path d="M125.500 792v7.500l5.500-3.750z"/><rect x="131.700" y="792" width="1.200" height="7.500"/></g>
<path d="M112.800 791.800v8l6.200-4z" fill="#f4f4f4"/>
<rect x="141" y="791" width="6.500" height="8.500" fill="#353535" stroke="#d8d8d8" stroke-width="0.900"/><path d="M142.500 793.500h3.500M142.500 795.500h3.500M142.500 797.500h3.500" stroke="#d8d8d8" stroke-width="0.700"/><path d="M148.700 793v8h-6" fill="none" stroke="#d8d8d8" stroke-width="0.800"/>
<rect x="161" y="791" width="6.500" height="8.500" fill="#353535" stroke="#42d66a" stroke-width="0.900"/><path d="M162.500 793.500h3.500M162.500 795.500h3.500M162.500 797.500h3.500" stroke="#42d66a" stroke-width="0.700"/><path d="M168.700 793v8h-6" fill="none" stroke="#42d66a" stroke-width="0.800"/>
</svg>
</body></html>
